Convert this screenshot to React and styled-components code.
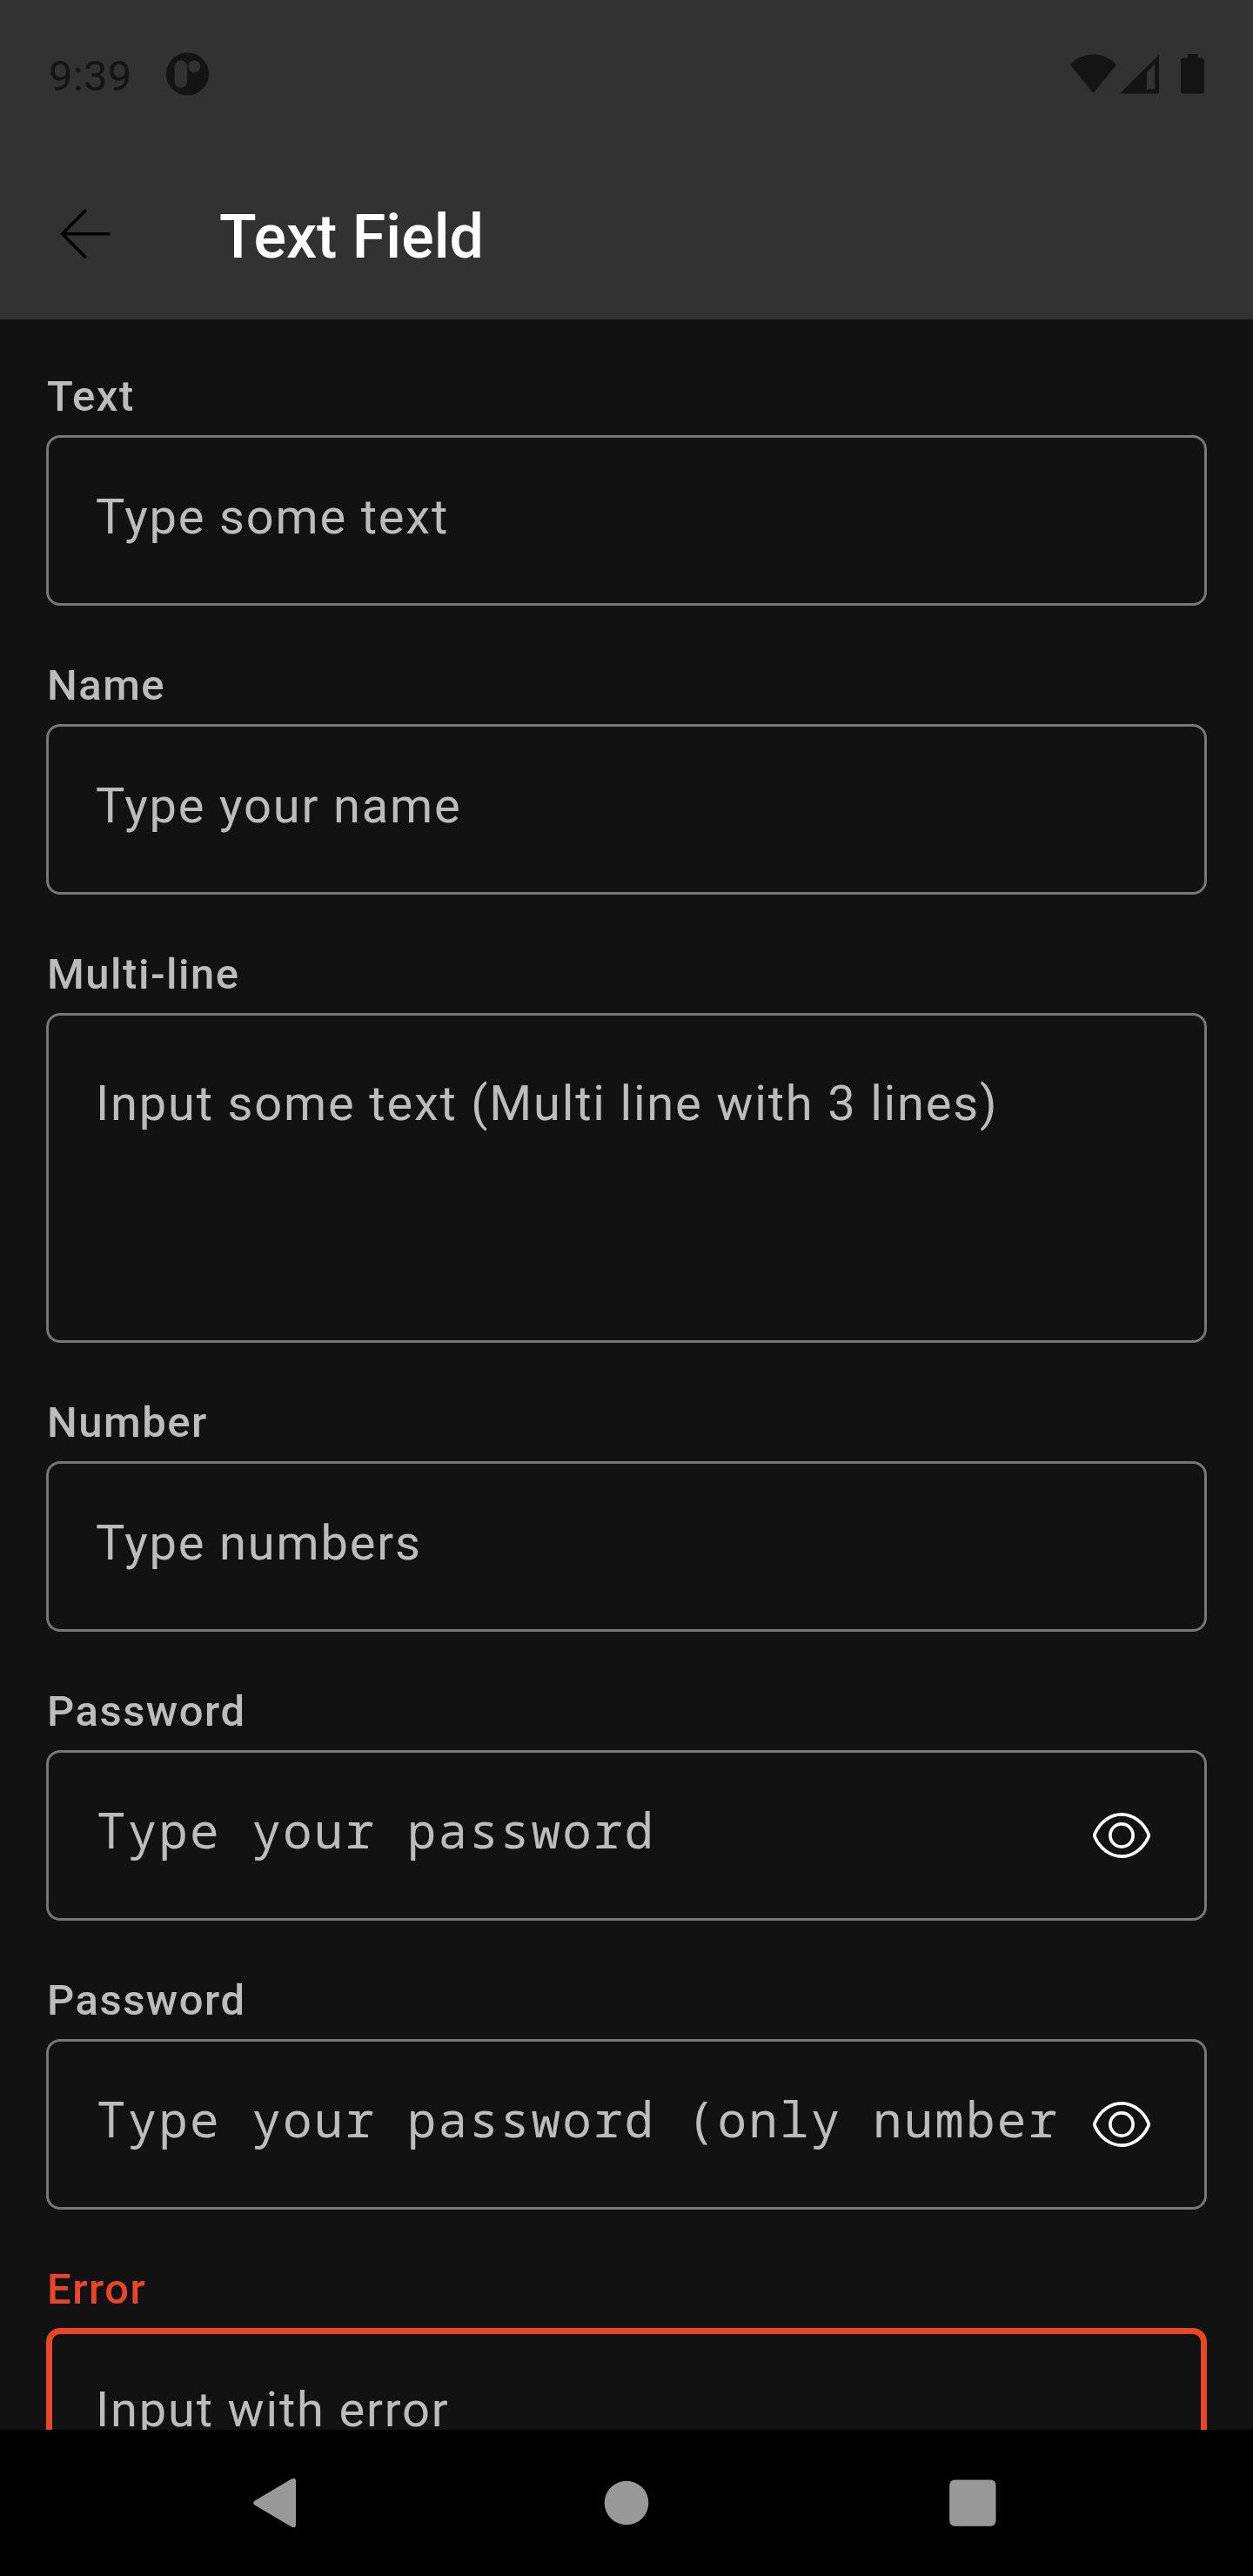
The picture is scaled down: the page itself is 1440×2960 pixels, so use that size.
import React from "react";
import styled, { createGlobalStyle } from "styled-components";

const GlobalStyle = createGlobalStyle`
  *, *::before, *::after { box-sizing: border-box; }
  body { margin: 0; background: #121212; }
`;

const Screen = styled.div`
  width: 1440px;
  height: 2960px;
  display: flex;
  flex-direction: column;
  overflow: hidden;
  background: #121212;
  font-family: Roboto, "Noto Sans", sans-serif;
`;

const Header = styled.header`
  flex: none;
  height: 367px;
  background: #323232;
`;

const StatusBar = styled.div`
  height: 171px;
  padding: 0 56px 1px;
  display: flex;
  align-items: center;
  color: #141414;
`;

const Clock = styled.span`
  width: 135px;
  font-size: 49px;
  line-height: 58px;
  letter-spacing: 0.3px;
  margin-top: 6px;
`;

const StatusIcons = styled.div`
  margin-left: auto;
  display: flex;
  align-items: center;
`;

const Toolbar = styled.div`
  height: 196px;
  padding-left: 56px;
  display: flex;
  align-items: center;
`;

const BackButton = styled.button`
  width: 84px;
  height: 84px;
  margin: 0 112px 0 0;
  padding: 0;
  border: 0;
  background: none;
  color: #000;
`;

const Title = styled.h1`
  margin: 6px 0 0;
  color: #fff;
  font-size: 70px;
  line-height: 82px;
  font-weight: 500;
`;

const Form = styled.main`
  flex: 1;
  min-height: 0;
  overflow: hidden;
  padding: 60px 53px 0;
  display: flex;
  flex-direction: column;
  gap: 63px;
`;

const Field = styled.label`
  flex: none;
  display: flex;
  flex-direction: column;
  gap: 15px;
`;

const Label = styled.span`
  height: 58px;
  padding-left: 1px;
  color: ${(p) => (p.$error ? "#e94627" : "#bcbcbc")};
  font-size: 49px;
  line-height: 58px;
  font-weight: 500;
  letter-spacing: 1.5px;
`;

const topInset = (p) => (p.$multiline ? 71 : p.$mono ? 53 : 61);

const Box = styled.div`
  --line: ${(p) => (p.$error ? 7 : 3)}px;
  height: ${(p) => (p.$multiline ? 379 : 196)}px;
  border: var(--line) solid ${(p) => (p.$error ? "#e94627" : "#777")};
  border-radius: 16px;
  padding: calc(${topInset}px - var(--line)) calc(56px - var(--line)) 0 calc(57px - var(--line));
  display: flex;
  align-items: flex-start;
`;

const Hint = styled.span`
  flex: 1;
  min-width: 0;
  white-space: nowrap;
  color: #bcbcbc;
  font-family: ${(p) => (p.$mono ? '"Noto Sans Mono", "Droid Sans Mono", "DejaVu Sans Mono", monospace' : "inherit")};
  font-size: 56px;
  line-height: ${(p) => (p.$mono ? 76 : 66)}px;
  letter-spacing: ${(p) => (p.$mono ? 2.08 : 1.82)}px;
  padding-left: ${(p) => (p.$mono ? 1 : 0)}px;
`;

const RevealButton = styled.button`
  flex: none;
  width: 84px;
  height: 84px;
  margin: 3px 0 0;
  padding: 0;
  border: 0;
  background: none;
  color: #fff;
`;

const NavBar = styled.nav`
  flex: none;
  height: 168px;
  background: #000;
  color: #999;
  display: flex;
  align-items: center;
  justify-content: center;
  gap: 314px;
`;

const NavButton = styled.button`
  width: 84px;
  height: 84px;
  padding: 0;
  border: 0;
  background: none;
  color: inherit;
`;

const Glyph = styled.svg`
  display: block;
  flex: none;
`;

const AppBadge = () => (
  <Glyph width="50" height="50" viewBox="0 0 50 50">
    <path
      fill="currentColor"
      fillRule="evenodd"
      d="M24.5 .5a24.5 24.5 0 1 1 0 49a24.5 24.5 0 1 1 0-49ZM16.9 9.500a7.200 7.200 0 0 0-7.200 7.200V33.600a7.200 7.200 0 0 0 14.400 0V16.700a7.200 7.200 0 0 0-7.200-7.200ZM32.300 9.500a6.900 6.900 0 1 0 0 13.800a6.900 6.900 0 1 0 0-13.800Z"
    />
  </Glyph>
);

const Wifi = () => (
  <Glyph width="53" height="46" viewBox="0 0 53 46">
    <path fill="currentColor" d="M0 12.500C7.500 4.500 16.500.6 26.500.6S45.500 4.500 53 12.500L26.500 45.200Z" />
  </Glyph>
);

const Signal = () => (
  <Glyph width="53" height="46" viewBox="0 0 53 46">
    <path fill="currentColor" fillRule="evenodd" d="M4 45.500L49 .8V45.500ZM35 20.800V40.500H44V11.800Z" />
  </Glyph>
);

const Battery = () => (
  <Glyph width="48" height="46" viewBox="0 0 48 46">
    <path fill="currentColor" d="M29 0H40.500V4.700H45.500Q48 4.700 48 7.200V43Q48 45.500 45.500 45.500H23.500Q21 45.500 21 43V7.200Q21 4.700 23.500 4.700H29Z" />
  </Glyph>
);

const BackArrow = () => (
  <Glyph width="84" height="84" viewBox="0 0 84 84" fill="none" stroke="currentColor" strokeWidth="3.600" strokeLinecap="round" strokeLinejoin="round">
    <path d="M68.700 41.700H15.500M41.700 15.500L15.500 41.700L41.700 67.900" />
  </Glyph>
);

const Eye = () => (
  <Glyph width="84" height="84" viewBox="0 0 84 84" fill="none" stroke="currentColor" strokeWidth="3.700">
    <path d="M11.200 40.300C17 27 29 17.900 42 17.900S67 27 72.800 40.300Q73.500 42 72.800 43.700C67 57 55 66.100 42 66.100S17 57 11.200 43.700Q10.500 42 11.200 40.300Z" />
    <circle cx="42" cy="42" r="13.100" />
  </Glyph>
);

const fields = [
  { label: "Text", hint: "Type some text" },
  { label: "Name", hint: "Type your name" },
  { label: "Multi-line", hint: "Input some text (Multi line with 3 lines)", multiline: true },
  { label: "Number", hint: "Type numbers" },
  { label: "Password", hint: "Type your password", password: true },
  { label: "Password", hint: "Type your password (only number", password: true },
  { label: "Error", hint: "Input with error", error: true },
];

export default function App() {
  return (
    <Screen>
      <GlobalStyle />
      <Header>
        <StatusBar>
          <Clock>9:39</Clock>
          <AppBadge />
          <StatusIcons>
            <Wifi />
            <Signal />
            <Battery />
          </StatusIcons>
        </StatusBar>
        <Toolbar>
          <BackButton aria-label="Back">
            <BackArrow />
          </BackButton>
          <Title>Text Field</Title>
        </Toolbar>
      </Header>
      <Form>
        {fields.map((f, i) => (
          <Field key={i}>
            <Label $error={f.error}>{f.label}</Label>
            <Box $error={f.error} $multiline={f.multiline} $mono={f.password}>
              <Hint $mono={f.password}>{f.hint}</Hint>
              {f.password && (
                <RevealButton aria-label="Show password">
                  <Eye />
                </RevealButton>
              )}
            </Box>
          </Field>
        ))}
      </Form>
      <NavBar>
        <NavButton aria-label="Back">
          <Glyph width="84" height="84" viewBox="0 0 84 84">
            <path fill="currentColor" d="M12.800 39.400Q9.500 42 12.800 44.600L55 69.600Q60 71.500 60 67V17Q60 12.500 55 14.400Z" />
          </Glyph>
        </NavButton>
        <NavButton aria-label="Home">
          <Glyph width="84" height="84" viewBox="0 0 84 84">
            <circle cx="42" cy="42" r="25.300" fill="currentColor" />
          </Glyph>
        </NavButton>
        <NavButton aria-label="Recents">
          <Glyph width="84" height="84" viewBox="0 0 84 84">
            <rect x="15.200" y="15.400" width="53.300" height="53.300" rx="6" fill="currentColor" />
          </Glyph>
        </NavButton>
      </NavBar>
    </Screen>
  );
}
